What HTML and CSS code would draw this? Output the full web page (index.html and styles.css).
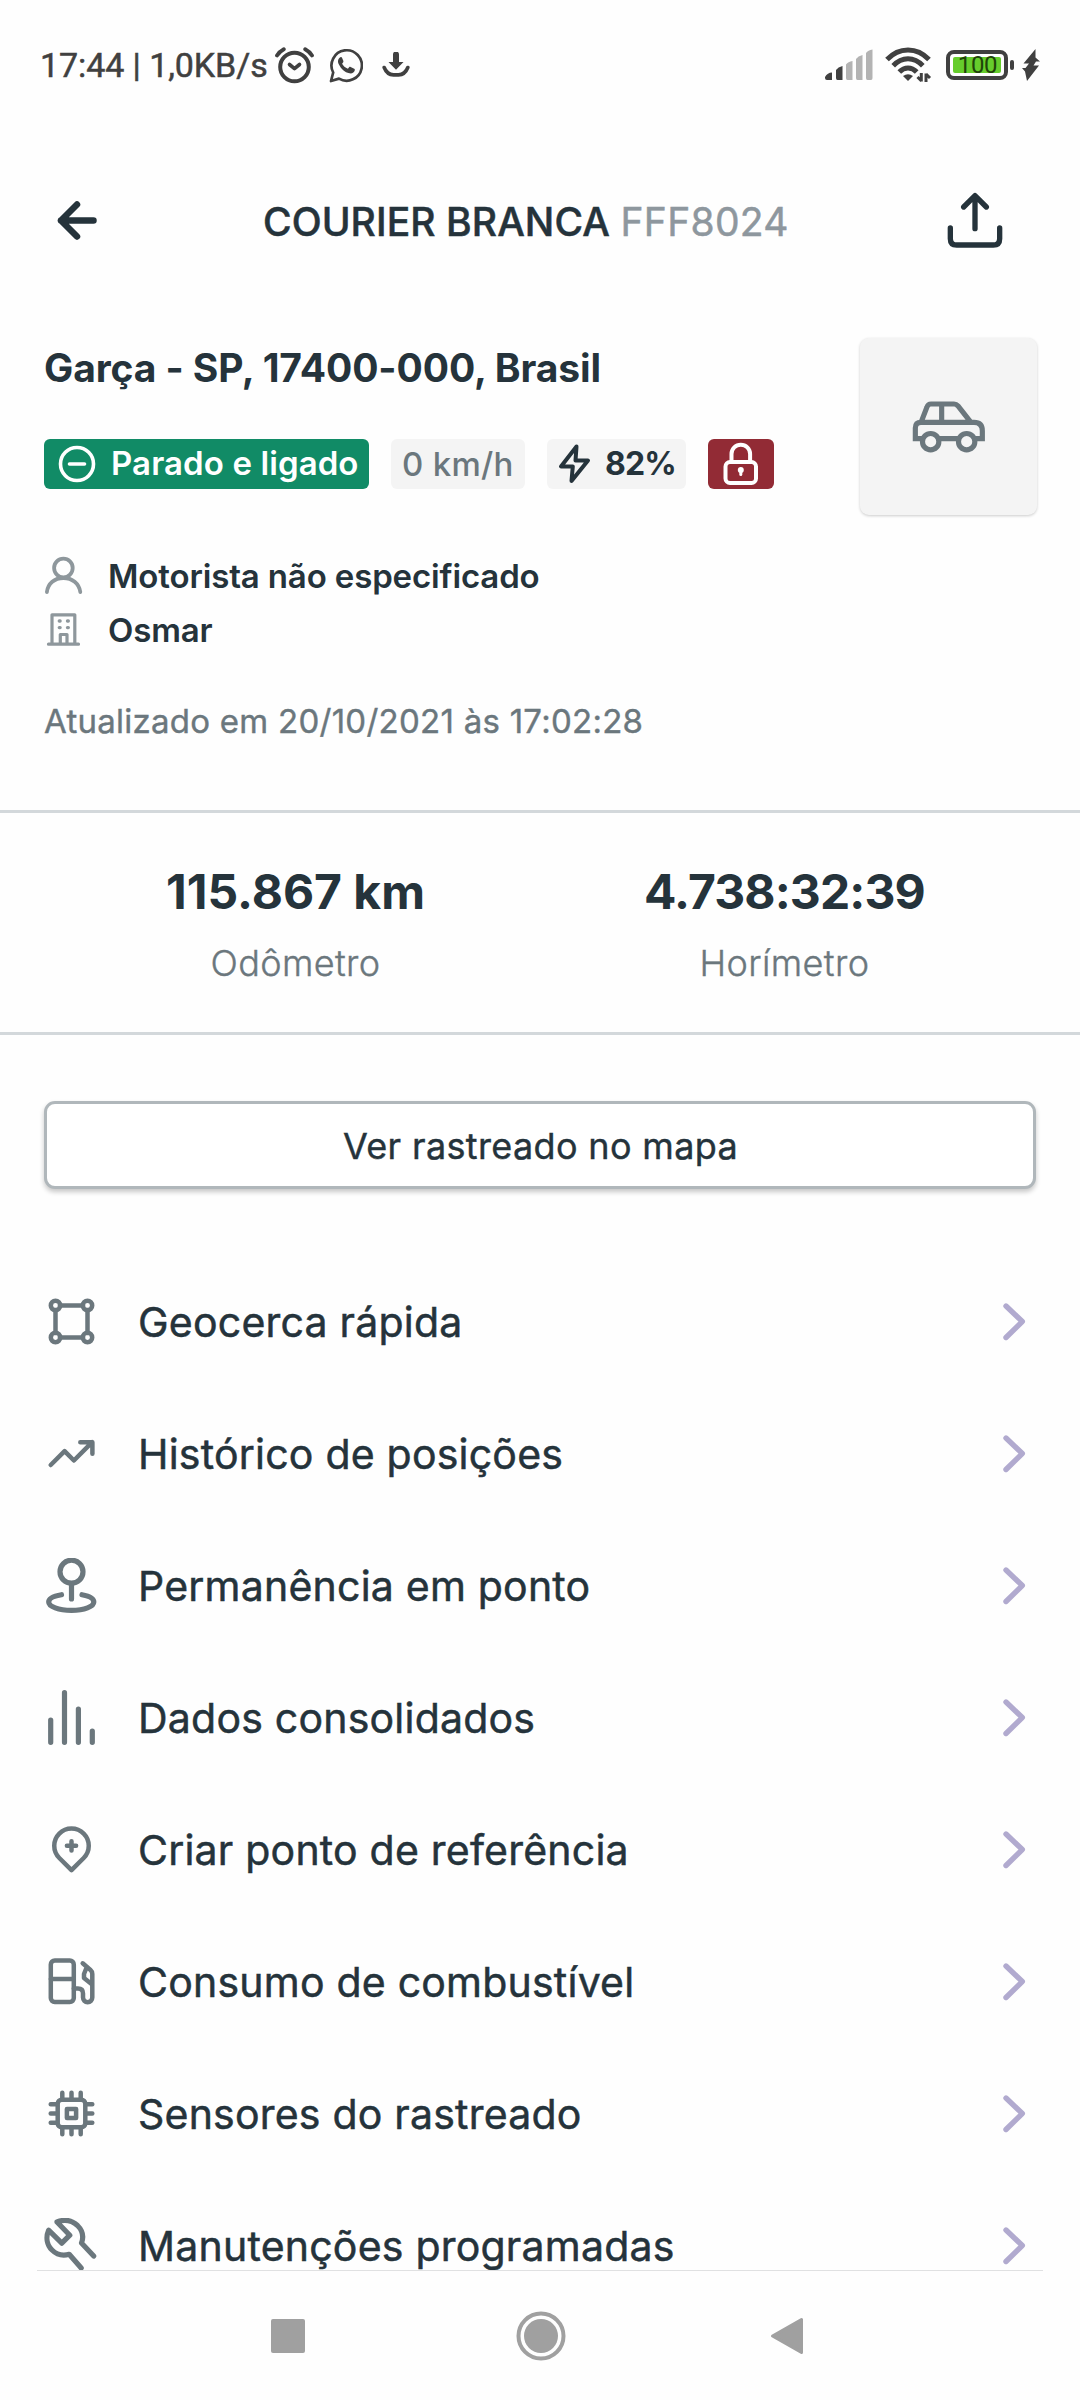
FILE: index.html
```html
<!DOCTYPE html>
<html lang="pt-BR">
<head>
<meta charset="utf-8">
<title>Courier Branca FFF8024</title>
<link rel="stylesheet" href="styles.css">
</head>
<body>
<div class="screen">
  <div class="status">
    <span class="clock">17:44 | 1,0KB/s</span>
    <svg class="s-alarm" width="40" height="37" viewBox="0 0 40 37" fill="none" stroke="#404040" stroke-linecap="round">
      <circle cx="19.5" cy="20" r="14.3" stroke-width="4"/>
      <path d="M2 8.5Q4.5 4.5 8.8 2.2M37 8.5Q34.500 4.500 30.200 2.200" stroke-width="3.8"/>
      <path d="M14.500 17.500L19.500 21.700L24.500 17.500" stroke-width="3.6" stroke-linejoin="round"/>
    </svg>
    <svg class="s-wa" width="34" height="35" viewBox="0 0 34 35">
      <path d="M2 33L4.200 24.500A15.200 15.200 0 1 1 10 30.600Z" fill="none" stroke="#404040" stroke-width="2.700" stroke-linejoin="round"/>
      <path d="M11.400 9.200C9 10.500 8.300 13.400 9.800 16.200C12.400 21.400 15.600 24.200 20.400 25.300C23 25.800 25.400 24.500 25.800 22.200C25.900 21.300 25.800 21 25.200 20.700L21.600 19C21 18.700 20.500 18.800 20.100 19.300L18.900 20.800C16.200 19.800 14.300 18 13.100 15.800L14.200 14.200C14.500 13.700 14.500 13.300 14.300 12.800L13 9.700C12.700 9 12.200 8.900 11.400 9.200Z" fill="#404040"/>
    </svg>
    <svg class="s-down" width="28" height="26" viewBox="0 0 28 26">
      <path d="M11 2.500a3 3 0 0 1 6 0V10H21.500L14 17.800L6.500 10H11Z" fill="#404040"/>
      <path d="M2.200 15.500Q5 22.700 11.500 22.900H16.500Q23 22.700 25.800 15.500" fill="none" stroke="#404040" stroke-width="3.600" stroke-linecap="round"/>
    </svg>
    <div class="status-right">
      <svg width="48" height="32" viewBox="0 0 48 32">
        <path d="M0 28Q2.500 23.500 7 23.500V31H2Q0 31 0 29ZM11 21Q13 18 17.500 17V31H12.500Q11 31 11 29Z" fill="#404040"/>
        <path d="M21 15.500Q23 12.500 27.500 12V31H22.500Q21 31 21 29ZM31 10Q33 7 37.500 6V31H32.500Q31 31 31 29ZM41 4Q43 1 47.500 .5V29Q47.500 31 46 31H42.500Q41 31 41 29Z" fill="#b3b3b3"/>
      </svg>
      <svg class="s-wifi" width="47" height="36" viewBox="0 0 47 36" fill="none" stroke="#404040" stroke-width="5">
        <path d="M2 12.500C14 -.3 32 -.3 44 12.500"/>
        <path d="M8.200 18.800C17 9.500 29 9.500 37.800 18.800"/>
        <path d="M14.300 25C19.500 19.500 26.500 19.500 31.700 25"/>
        <path d="M18 29Q23 25.500 28 29L23 34Z" fill="#404040" stroke="none"/>
        <path d="M36.300 26V34.500M36.500 34L32.500 30M41 35V26.500M41 27L45 31" stroke-width="3"/>
      </svg>
      <div class="battery"><div class="charge">100</div></div>
      <div class="nub"></div>
      <svg class="s-bolt" width="18" height="32" viewBox="0 0 18 32"><path d="M13.500 0L1.500 14.500H7L3.500 19H0L3 22.500L5 32L17 16.500H11.500L14 12.500H18L13.500 8.500Z" fill="#404040"/></svg>
    </div>
  </div>

  <header class="header">
    <svg width="42" height="42" viewBox="0 0 42 42" fill="none" stroke="#25333b" stroke-width="6.500" stroke-linecap="round" stroke-linejoin="round"><path d="M36.500 21.500H4M20 5.500L4 21.500L20 37.500"/></svg>
    <h1 class="title">COURIER BRANCA <span class="plate">FFF8024</span></h1>
    <svg width="56" height="56" viewBox="381 98 168 168" fill="none" stroke="#25333b" stroke-width="16" stroke-linecap="round" stroke-linejoin="round"><path d="M391 206V238Q391 257 410 257H520Q539 257 539 238V206M465 208V110M431 143L465 109L499 143"/></svg>
  </header>

  <section class="summary">
    <div class="info">
      <div class="address">Garça - SP, 17400-000, Brasil</div>
      <div class="badges">
        <span class="badge green">
          <svg width="38" height="38" viewBox="-19 -19 38 38" fill="none" stroke="#fff" stroke-width="3.600" stroke-linecap="round"><circle r="16.500"/><path d="M-7.500 0H7.500"/></svg>
          <span>Parado e ligado</span>
        </span>
        <span class="badge speed">0 km/h</span>
        <span class="badge power">
          <svg width="34" height="40" viewBox="0 0 34 40" fill="none" stroke="#25333b" stroke-width="4" stroke-linejoin="round"><path d="M18.500 2.500L3 22.500H14.800L13.500 37L30 16.500H17.500Z"/></svg>
          <span>82%</span>
        </span>
        <span class="badge lock">
          <svg width="36" height="43" viewBox="0 0 36 43" fill="none" stroke="#fff" stroke-width="4"><rect x="2.500" y="20" width="30.500" height="21" rx="4.500"/><path d="M8.500 20V12a9.300 9.300 0 0 1 18.600 0V20"/><circle cx="17.800" cy="28" r="3" fill="#fff" stroke="none"/><path d="M17.800 28V32.500" stroke-linecap="round" stroke-width="3"/></svg>
        </span>
      </div>
      <div class="person">
        <svg width="39" height="40" viewBox="44 556 39 40" fill="none" stroke="#8e979c" stroke-width="3.800" stroke-linecap="round"><circle cx="63.400" cy="568" r="9.300"/><path d="M46.900 592C48 583.500 54.500 578 63.400 578S79 583.500 80.300 592"/></svg>
        <span>Motorista não especificado</span>
      </div>
      <div class="person">
        <svg width="39" height="40" viewBox="44 610 39 40" fill="none" stroke="#8e979c" stroke-width="3.200" stroke-linecap="round" stroke-linejoin="round"><path d="M48.500 644.200H78.500M52 644V614.800H74.800V644M60.300 644V634.500H67V644"/><path d="M59.300 621h.8M67.500 621h.8M59.300 627.600h.8M67.500 627.600h.8" stroke-width="3.400"/></svg>
        <span>Osmar</span>
      </div>
      <div class="updated">Atualizado em 20/10/2021 às 17:02:28</div>
    </div>
    <div class="thumb">
      <svg width="74" height="52" viewBox="275 722 222 156" fill="none" stroke="#6b777d" stroke-width="15.500" stroke-linejoin="round"><path d="M307 835H285V803Q285 786 302 786H461Q486 786 486 811V835H464M356 835H414M303 784L320 740Q323 731 332 731H401Q408 731 413 737L450 784M364 731V786" stroke-linejoin="miter"/><circle cx="331" cy="844" r="24.500"/><circle cx="439" cy="844" r="24.500"/></svg>
    </div>
  </section>

  <section class="stats">
    <div class="stat"><div class="value">115.867 km</div><div class="label">Odômetro</div></div>
    <div class="stat"><div class="value hours">4.738:32:39</div><div class="label">Horímetro</div></div>
  </section>

  <button class="map-button">Ver rastreado no mapa</button>

  <ul class="menu">
    <li class="item">
      <svg class="icon" viewBox="-27.500 -27.500 56 58"><circle cx="-16" cy="-16" r="4.700"/><circle cx="16" cy="-16" r="4.700"/><circle cx="-16" cy="16" r="4.700"/><circle cx="16" cy="16" r="4.700"/><path d="M-11.500 -16H11.500M-11.500 16H11.500M-16 -11.500V11.500M16 -11.500V11.500"/></svg>
      <span class="text">Geocerca rápida</span>
      <svg class="chevron" viewBox="0 0 24 40"><path d="M4 4L20.300 19.500L4 35.500"/></svg>
    </li>
    <li class="item">
      <svg class="icon" viewBox="-27.500 -27.500 56 58"><path d="M-20.800 11.500L-6.900 -2.300L2.400 7L20.700 -11.300M8.800 -11.300H20.900V.3"/></svg>
      <span class="text">Histórico de posições</span>
      <svg class="chevron" viewBox="0 0 24 40"><path d="M4 4L20.300 19.500L4 35.500"/></svg>
    </li>
    <li class="item">
      <svg class="icon bold" viewBox="-27.500 -27.500 56 58"><circle cx="0" cy="-13.800" r="11.500"/><path d="M0 -2V13.500M-10 9.200C-18 10.500 -22.800 13 -22.800 16.500C-22.800 21 -13 24.800 0 24.800S22.300 21 22.300 16.500C22.300 13 18 10.500 10.500 9.200"/></svg>
      <span class="text">Permanência em ponto</span>
      <svg class="chevron" viewBox="0 0 24 40"><path d="M4 4L20.300 19.500L4 35.500"/></svg>
    </li>
    <li class="item">
      <svg class="icon bold" viewBox="-27.500 -27.500 56 58"><path d="M-20.800 2.500V24.800M-7 -24.800V24.800M6.900 -8.500V24.800M20.800 13.500V24.800"/></svg>
      <span class="text">Dados consolidados</span>
      <svg class="chevron" viewBox="0 0 24 40"><path d="M4 4L20.300 19.500L4 35.500"/></svg>
    </li>
    <li class="item">
      <svg class="icon" viewBox="-27.500 -27.500 56 58"><path d="M-12.200 8.500A17.250 17.250 0 1 1 12.200 8.500L0 20.700ZM0 -8.300V.9M-4.600 -3.700H4.600"/></svg>
      <span class="text">Criar ponto de referência</span>
      <svg class="chevron" viewBox="0 0 24 40"><path d="M4 4L20.300 19.500L4 35.500"/></svg>
    </li>
    <li class="item">
      <svg class="icon" viewBox="-27.500 -27.500 56 58"><rect x="-20.700" y="-21" width="23" height="41.500" rx="4"/><path d="M-20.700 -2.500H2.300M2.300 7H6.500Q11.500 7 11.500 12V16A4.600 4.600 0 0 0 20.800 16V-7.500Q20.800 -10 19 -11.500L11.200 -18.200M15.300 -14.500L12.500 -7.500V-3.500L20 2.500"/></svg>
      <span class="text">Consumo de combustível</span>
      <svg class="chevron" viewBox="0 0 24 40"><path d="M4 4L20.300 19.500L4 35.500"/></svg>
    </li>
    <li class="item">
      <svg class="icon" viewBox="-27.500 -27.500 56 58"><rect x="-13.800" y="-13.800" width="27.600" height="27.600" rx="4"/><rect x="-4.600" y="-4.600" width="9.200" height="9.200"/><path d="M-9.200 -15V-20.800M0 -15V-20.800M9.200 -15V-20.800M-9.200 15V20.800M0 15V20.800M9.200 15V20.800M-15 -9.200H-20.800M-15 0H-20.800M-15 9.200H-20.800M15 -9.200H20.800M15 0H20.800M15 9.200H20.800"/></svg>
      <span class="text">Sensores do rastreado</span>
      <svg class="chevron" viewBox="0 0 24 40"><path d="M4 4L20.300 19.500L4 35.500"/></svg>
    </li>
    <li class="item">
      <svg class="icon bold" viewBox="-27.500 -27.500 56 58"><path d="M22.200 10.500L10 -2.500C12.500 -9 10.500 -15.500 6 -20C.5 -25 -7 -26.500 -14.500 -23.500L-1.700 -10.300L-9.700 -2.300L-22.900 -15.300C-26 -8 -24.500 -.5 -19.500 4.500C-15 9 -8.500 10.500 -2.300 8.800L9.700 22.500"/></svg>
      <span class="text">Manutenções programadas</span>
      <svg class="chevron" viewBox="0 0 24 40"><path d="M4 4L20.300 19.500L4 35.500"/></svg>
    </li>
  </ul>

  <nav class="nav">
    <svg width="34" height="34" viewBox="0 0 34 34"><rect width="34" height="34" rx="2" fill="#a0a0a0"/></svg>
    <svg class="home" width="50" height="50" viewBox="-25 -25 50 50"><circle r="22.500" fill="none" stroke="#a0a0a0" stroke-width="4"/><circle r="17" fill="#a0a0a0"/></svg>
    <svg class="back" width="34" height="38" viewBox="0 0 34 38"><path d="M2.500 19L31.500 2.500V35.500Z" fill="#a0a0a0" stroke="#a0a0a0" stroke-width="3" stroke-linejoin="round"/></svg>
  </nav>
</div>
</body>
</html>
```
FILE: styles.css
```css
* { box-sizing: border-box; }
body {
  margin: 0;
  background: #fefefe;
  color: #25333b;
  font-family: Inter, "Liberation Sans", sans-serif;
}
svg { display: block; flex: none; }
.screen {
  width: 1080px;
  height: 2400px;
  display: flex;
  flex-direction: column;
  overflow: hidden;
}

/* system status bar */
.status {
  height: 128px;
  flex: none;
  display: flex;
  align-items: center;
  padding: 2px 40px 0 40px;
  color: #404040;
  font-family: Roboto, sans-serif;
}
.clock {
  width: 235px;
  font-size: 34px;
  font-weight: 400;
  letter-spacing: -0.08px;
  -webkit-text-stroke: 0.5px #404040;
  white-space: pre;
}
.s-wa { margin-left: 14px; }
.s-down { margin-left: 19px; }
.status-right {
  margin-left: auto;
  display: flex;
  align-items: center;
}
.s-wifi { margin-left: 12px; }
.battery {
  width: 62px;
  height: 30px;
  margin-left: 14px;
  border: 4px solid #404040;
  border-radius: 8px;
  padding: 3px;
}
.charge {
  height: 16px;
  border-radius: 2px;
  background: #66cd2c;
  color: #1f4309;
  font-size: 24px;
  line-height: 17px;
  letter-spacing: -0.4px;
  text-align: center;
  padding-left: 1px;
}
.nub {
  width: 4px;
  height: 10px;
  margin-left: 2px;
  border-radius: 2px;
  background: #404040;
}
.s-bolt { margin-left: 8px; }

/* title bar */
.header {
  height: 184px;
  flex: none;
  display: grid;
  grid-template-columns: 206px 1fr 133px;
  align-items: center;
  padding-left: 57px;
}
.title {
  margin: 3px 0 0;
  font-size: 39px;
  font-weight: 500;
  letter-spacing: 0.08px;
  -webkit-text-stroke: 0.5px currentColor;
  white-space: nowrap;
}
.plate {
  color: #8e979e;
  font-weight: 400;
  letter-spacing: 0.3px;
}

/* vehicle summary */
.summary {
  height: 498px;
  flex: none;
  display: flex;
  justify-content: space-between;
  padding: 26px 43px 0 44px;
}
.address {
  height: 60px;
  line-height: 60px;
  font-size: 39px;
  font-weight: 700;
  letter-spacing: -0.1px;
}
.badges {
  display: flex;
  gap: 22px;
  margin-top: 41px;
}
.badge {
  height: 50px;
  display: flex;
  align-items: center;
  padding-bottom: 1px;
  border-radius: 6px;
  background: #f4f4f4;
  font-size: 33px;
  font-weight: 600;
}
.green {
  width: 325px;
  padding-left: 14px;
  gap: 15px;
  background: #118b66;
  color: #fff;
  letter-spacing: 0.1px;
}
.green span, .power span { margin-top: -1px; }
.speed {
  width: 134px;
  padding-left: 11px;
  color: #6b777d;
  font-weight: 500;
  letter-spacing: 0.3px;
}
.power {
  width: 139px;
  padding-left: 11px;
  gap: 13px;
  font-size: 32px;
  font-weight: 700;
  letter-spacing: -0.9px;
}
.lock {
  width: 66px;
  justify-content: center;
  background: #922b35;
}
.person {
  height: 54px;
  display: flex;
  align-items: center;
  gap: 25px;
  font-size: 33px;
  font-weight: 600;
  letter-spacing: -0.14px;
}
.badges + .person { margin-top: 60px; }
.updated {
  margin-top: 44px;
  line-height: 40px;
  font-size: 33px;
  font-weight: 400;
  letter-spacing: 0.26px;
  -webkit-text-stroke: 0.4px currentColor;
  color: #6b777d;
}
.thumb {
  width: 177px;
  height: 177px;
  display: flex;
  align-items: center;
  justify-content: center;
  border-radius: 9px;
  background: #f4f4f4;
  box-shadow: 0 1px 3px rgba(0, 0, 0, 0.2);
}

/* counters */
.stats {
  height: 225px;
  flex: none;
  display: grid;
  grid-template-columns: 1fr 1fr;
  padding: 49px 51px 0;
  border-top: 3px solid #d3d8db;
  border-bottom: 3px solid #d3d8db;
  text-align: center;
}
.value {
  line-height: 60px;
  font-size: 48px;
  font-weight: 700;
}
.hours { letter-spacing: -0.88px; }
.label {
  margin-top: 16px;
  line-height: 50px;
  font-size: 36px;
  font-weight: 300;
  letter-spacing: 0.38px;
  -webkit-text-stroke: 0.4px currentColor;
  color: #6b777d;
}

.map-button {
  height: 88px;
  flex: none;
  margin: 66px 44px 67px;
  padding: 2px 0 0 1px;
  border: 3px solid #b0b7bb;
  border-radius: 11px;
  background: #fff;
  box-shadow: 0 3px 5px rgba(0, 0, 0, 0.22);
  color: #25333b;
  font: 400 36px Inter, sans-serif;
  letter-spacing: 0.35px;
  -webkit-text-stroke: 0.4px currentColor;
}

/* action list */
.menu {
  flex: 1;
  min-height: 0;
  overflow: hidden;
  margin: 0;
  padding: 0 54px 0 44px;
  list-style: none;
}
.item {
  height: 132px;
  display: flex;
  align-items: center;
}
.icon {
  width: 56px;
  height: 58px;
  margin-top: 2px;
  fill: none;
  stroke: #6b777d;
  stroke-width: 4.5;
  stroke-linecap: round;
  stroke-linejoin: round;
}
.bold { stroke-width: 5.2; }
.text {
  flex: 1;
  margin-left: 38px;
  font-size: 41px;
  font-weight: 400;
  letter-spacing: 0.22px;
  -webkit-text-stroke: 0.5px currentColor;
  white-space: nowrap;
}
.chevron {
  width: 24px;
  height: 40px;
  fill: none;
  stroke: #b1aacf;
  stroke-width: 5.4;
  stroke-linecap: round;
  stroke-linejoin: round;
}

/* system navigation */
.nav {
  height: 130px;
  flex: none;
  display: flex;
  align-items: center;
  margin: 0 37px;
  padding-left: 234px;
  border-top: 1px solid #e0e1e2;
}
.home { margin-left: 211px; }
.back { margin-left: 204px; }
```
